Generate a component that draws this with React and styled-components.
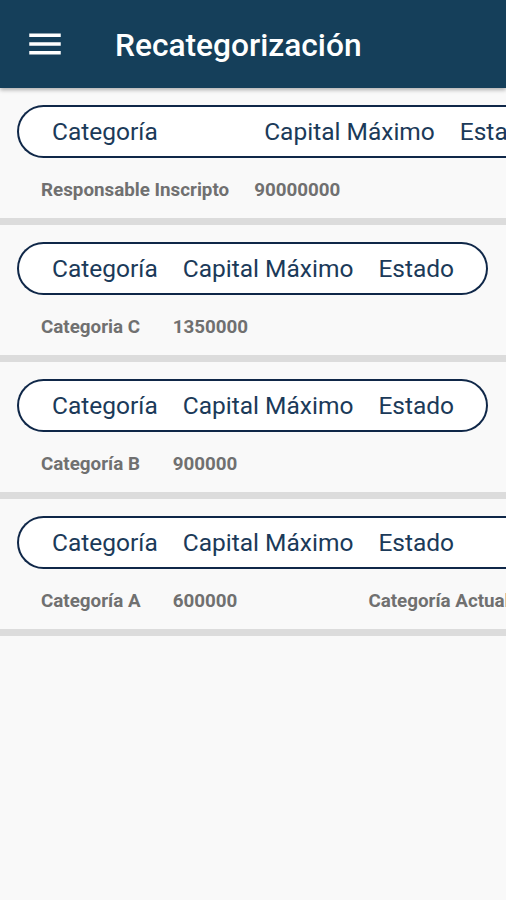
import React from "react";
import styled, { createGlobalStyle } from "styled-components";

const GlobalStyle = createGlobalStyle`
  html, body {
    margin: 0;
    padding: 0;
    background: #f9f9f9;
    font-family: Roboto, "Noto Sans", sans-serif;
    overflow-x: hidden;
  }
`;

const Page = styled.div`
  min-height: 900px;
  background: #f9f9f9;
  overflow-x: hidden;
`;

const AppBar = styled.header`
  height: 88px;
  background: #153f5a;
  display: flex;
  align-items: center;
  padding-left: 24px;
  box-shadow: 0 2px 4px rgba(0, 0, 0, 0.3);
  position: relative;
  z-index: 1;
`;

const MenuButton = styled.svg`
  width: 42px;
  height: 42px;
  flex: none;
`;

const Title = styled.h1`
  margin: 3px 0 0 49px;
  color: #ffffff;
  font-family: Roboto, sans-serif;
  font-weight: 500;
  font-size: 31.7px;
  letter-spacing: 0;
`;

const Section = styled.section`
  padding: 17px 0 0 17px;
  border-bottom: 7px solid #dcdcdc;
`;

const Table = styled.table`
  border-collapse: separate;
  border-spacing: 0;
  white-space: nowrap;
`;

const HeadCell = styled.th`
  font-family: Roboto, sans-serif;
  font-weight: 400;
  font-size: 24.5px;
  color: #1b3a59;
  text-align: left;
  line-height: 49px;
  padding: 0 15px 0 10px;
  background: #ffffff;
  border-top: 2px solid #0f2748;
  border-bottom: 2px solid #0f2748;

  &:first-child {
    padding-left: 33px;
    border-left: 2px solid #0f2748;
    border-radius: 27px 0 0 27px;
  }
  &:last-child {
    padding-right: 32px;
    border-right: 2px solid #0f2748;
    border-radius: 0 27px 27px 0;
  }
`;

const DataCell = styled.td`
  font-family: Roboto, sans-serif;
  font-weight: 700;
  font-size: 18.8px;
  color: #707070;
  line-height: 56px;
  padding: 4px 25px 0 0;
  text-align: left;

  &:first-child {
    padding-left: 24px;
  }
`;

const rows = [
  { cat: "Responsable Inscripto", cap: "90000000", estado: "" },
  { cat: "Categoria C", cap: "1350000", estado: "" },
  { cat: "Categoría B", cap: "900000", estado: "" },
  { cat: "Categoría A", cap: "600000", estado: "Categoría Actual" },
];

function MenuIcon() {
  return (
    <MenuButton viewBox="0 0 24 24" aria-hidden="true">
      <path d="M3 18h18v-2H3v2zm0-5h18v-2H3v2zm0-7v2h18V6H3z" fill="#ffffff" />
    </MenuButton>
  );
}

export default function App() {
  return (
    <Page>
      <GlobalStyle />
      <AppBar>
        <MenuIcon />
        <Title>Recategorización</Title>
      </AppBar>
      {rows.map((r, i) => (
        <Section key={i}>
          <Table>
            <thead>
              <tr>
                <HeadCell>Categoría</HeadCell>
                <HeadCell>Capital Máximo</HeadCell>
                <HeadCell>Estado</HeadCell>
              </tr>
            </thead>
            <tbody>
              <tr>
                <DataCell>{r.cat}</DataCell>
                <DataCell>{r.cap}</DataCell>
                <DataCell>{r.estado}</DataCell>
              </tr>
            </tbody>
          </Table>
        </Section>
      ))}
    </Page>
  );
}
